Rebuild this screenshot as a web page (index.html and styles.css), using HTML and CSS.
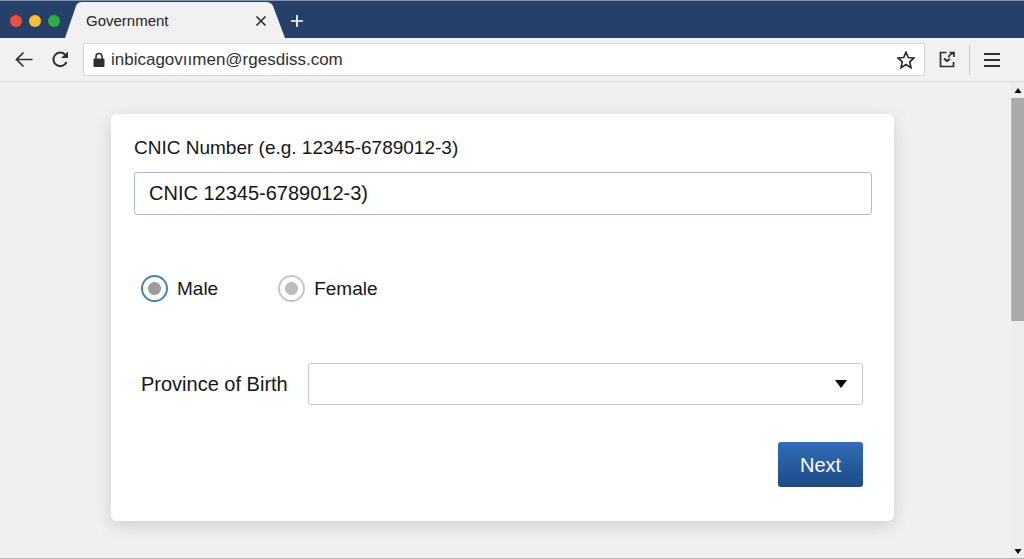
FILE: index.html
```
<!DOCTYPE html>
<html lang="en">
<head>
	<meta charset="utf-8">
	<meta name="viewport" content="width=device-width, initial-scale=1">
	<title>Government</title>
	<link rel="stylesheet" href="styles.css">
</head>
<body>
	<div class="browser">

		<header class="tabbar">
			<div class="lights">
				<span class="light red"></span>
				<span class="light yellow"></span>
				<span class="light green"></span>
			</div>
			<div class="tab">
				<svg class="tab-shape" viewBox="0 0 220 37" preserveAspectRatio="none" aria-hidden="true">
					<path d="M0 37 L11 4 Q12.500 0 17 0 H201 Q206 0 208 4 L220 37 Z"/>
				</svg>
				<span class="tab-title">Government</span>
				<button class="icon tab-close" type="button" aria-label="Close tab">
					<svg width="12" height="12" viewBox="0 0 12 12"><path d="M1.500 1.500 L10.500 10.500 M10.500 1.500 L1.500 10.500"/></svg>
				</button>
			</div>
			<button class="icon tab-new" type="button" aria-label="New tab">
				<svg width="14" height="14" viewBox="0 0 14 14"><path d="M7 1 V13 M1 7 H13"/></svg>
			</button>
		</header>

		<nav class="toolbar">
			<button class="icon" type="button" aria-label="Back">
				<svg width="18" height="18" viewBox="0 0 18 18"><path d="M17.500 8.500 H1.500 M8.500 1.500 L1.500 8.500 L8.500 15.500"/></svg>
			</button>
			<button class="icon" type="button" aria-label="Reload">
				<svg width="18" height="18" viewBox="0 0 18 18"><path class="thick" d="M14 3.500 A6.800 6.800 0 1 0 15.500 11"/><path class="solid" d="M17 0.500 V7 H10 Z"/></svg>
			</button>
			<div class="address">
				<svg class="lock" width="12" height="16" viewBox="0 0 12 16" aria-hidden="true"><path d="M3 7 V4.500 A3 3 0 0 1 9 4.500 V7"/><rect x="0.500" y="6.500" width="11" height="8.500" rx="1"/></svg>
				<input class="url" type="text" aria-label="Address" value="inbicagovıımen@rgesdiss.com">
				<button class="icon" type="button" aria-label="Bookmark">
					<svg width="18" height="18" viewBox="0 0 18 18"><path d="M9 1.200 L11.300 6.500 L17 7 L12.700 10.900 L14 16.700 L9 13.600 L4 16.700 L5.300 10.900 L1 7 L6.700 6.500 Z"/></svg>
				</button>
			</div>
			<button class="icon" type="button" aria-label="Share">
				<svg width="16" height="18" viewBox="0 0 16 18"><path d="M7.500 1.500 H1.500 V15.500 H14.500 V11 M9.500 6.500 Q10 3.500 14 2.500 M10.500 1.500 H15 V6"/><path class="thick" d="M5 7.500 L8 10 L11 8"/></svg>
			</button>
			<span class="divider"></span>
			<button class="icon" type="button" aria-label="Menu">
				<svg width="16" height="14" viewBox="0 0 16 14"><path class="thick" d="M0 1 H16 M0 7 H16 M0 13 H16"/></svg>
			</button>
		</nav>

		<div class="viewport">
			<main class="page">
				<form class="card">
					<div class="field">
						<label for="cnic">CNIC Number (e.g. 12345-6789012-3)</label>
						<input class="textbox" type="text" id="cnic" name="cnic" value="CNIC 12345-6789012-3)">
					</div>

					<div class="genders">
						<label class="gender"><input type="radio" name="gender" value="male" checked> Male</label>
						<label class="gender"><input type="radio" name="gender" value="female"> Female</label>
					</div>

					<div class="province">
						<label for="province">Province of Birth</label>
						<select id="province" name="province">
							<option value=""></option>
						</select>
					</div>

					<div class="actions">
						<button class="next" type="submit">Next</button>
					</div>
				</form>
			</main>

			<div class="scrollbar" aria-hidden="true">
				<svg width="8" height="5" viewBox="0 0 8 5"><path d="M4 0 L7.500 5 H0.500 Z"/></svg>
				<div class="track"><div class="thumb"></div></div>
				<svg width="8" height="5" viewBox="0 0 8 5"><path d="M4 5 L7.500 0 H0.500 Z"/></svg>
			</div>
		</div>

	</div>
</body>
</html>
```

FILE: styles.css
```
*{box-sizing:border-box;}
body{margin:0;font-family:"Liberation Sans",Arial,sans-serif;font-size:19px;line-height:24px;color:#151515;background:#f0f0f0;}
input,select,button{font:inherit;color:inherit;margin:0;}

.browser{display:flex;flex-direction:column;min-height:100vh;border-top:1px solid #8594ae;border-bottom:1px solid #b5b5b5;}

.icon{display:flex;flex:none;padding:0;border:0;background:none;color:#303030;cursor:pointer;}
.icon svg{fill:none;stroke:currentColor;stroke-width:1.7;}
.icon .thick{stroke-width:2;}
.icon .solid{fill:currentColor;stroke:none;}

/* tab strip */
.tabbar{display:flex;align-items:center;height:37px;background:#264069;}
.lights{display:flex;gap:7px;padding:2px 5px 0 10px;}
.light{width:12px;height:12px;border-radius:50%;}
.red{background:#f04e3e;}
.yellow{background:#f8c134;}
.green{background:#2fae45;}
.tab{display:flex;position:relative;align-items:center;justify-content:space-between;align-self:flex-end;width:220px;height:36px;padding:2px 18px 0 21px;}
.tab-shape{position:absolute;top:0;left:0;width:100%;height:100%;fill:#f1f1f1;}
.tab-title{position:relative;font-size:15px;color:#252525;}
.tab-close{position:relative;}
.tab-new{margin-left:5px;padding-top:2px;color:#fff;}

/* toolbar */
.toolbar{display:flex;align-items:center;gap:14px;padding:5px 24px 5px 15px;background:#f1f1f1;border-bottom:1px solid #dcdcdc;}
.toolbar > .icon:first-child{margin-right:4px;}
.address{display:flex;flex:1;align-items:center;height:33px;padding:0 9px;background:#fff;border:1px solid #d6d6d6;}
.lock{flex:none;fill:#303030;}
.lock path{fill:none;stroke:#303030;stroke-width:1.6;}
.url{flex:1;min-width:0;padding:0 6px;border:0;outline:0;background:none;font-size:17px;color:#303030;}
.divider{width:1px;height:30px;background:#c9c9c9;}

/* page */
.viewport{display:flex;flex:1;}
.page{flex:1;padding:32px 117px 37px 111px;}
.card{padding:22px 22px 34px 23px;background:#fff;border-radius:6px;box-shadow:0 5px 18px rgba(0,0,0,.14);}
.field label{display:block;margin-bottom:12px;}
.textbox{display:block;width:100%;height:43px;padding:0 14px;border:1px solid #a9bdd8;border-radius:3px;background:#fff;font-size:20px;}
.genders{display:flex;gap:60px;padding:60px 7px 0;}
.gender{display:flex;align-items:center;gap:9px;}
.gender input{appearance:none;width:27px;height:27px;border:2px solid #c6c6c6;border-radius:50%;background:radial-gradient(circle,#bdbdbd 6px,#fff 7px);}
.gender input:checked{border-color:#4580b5;background:radial-gradient(circle,#9c9c9c 6px,#fff 7px);}
.province{display:flex;align-items:center;gap:20px;padding:61px 9px 0 7px;font-size:20px;}
.province select{appearance:none;flex:1;min-width:0;height:42px;padding:0 40px 0 14px;border:1px solid #c6c6c6;border-radius:3px;background:#fff url("data:image/svg+xml,%3Csvg xmlns='http://www.w3.org/2000/svg' width='12' height='8'%3E%3Cpath d='M0 0H12L6 8Z'/%3E%3C/svg%3E") no-repeat right 15px center;}
.actions{display:flex;justify-content:flex-end;padding:37px 9px 0;}
.next{width:85px;height:45px;padding:0;border:0;border-radius:3px;background:linear-gradient(#2f6db7,#1d4b87);color:#fff;font-size:20px;cursor:pointer;}

/* scrollbar */
.scrollbar{display:flex;flex-direction:column;align-items:center;gap:5px;width:13px;padding:6px 0 4px;background:#ededed;}
.track{flex:1;width:100%;}
.thumb{height:50%;background:#aaa;border-left:1px solid #bababa;}
```
